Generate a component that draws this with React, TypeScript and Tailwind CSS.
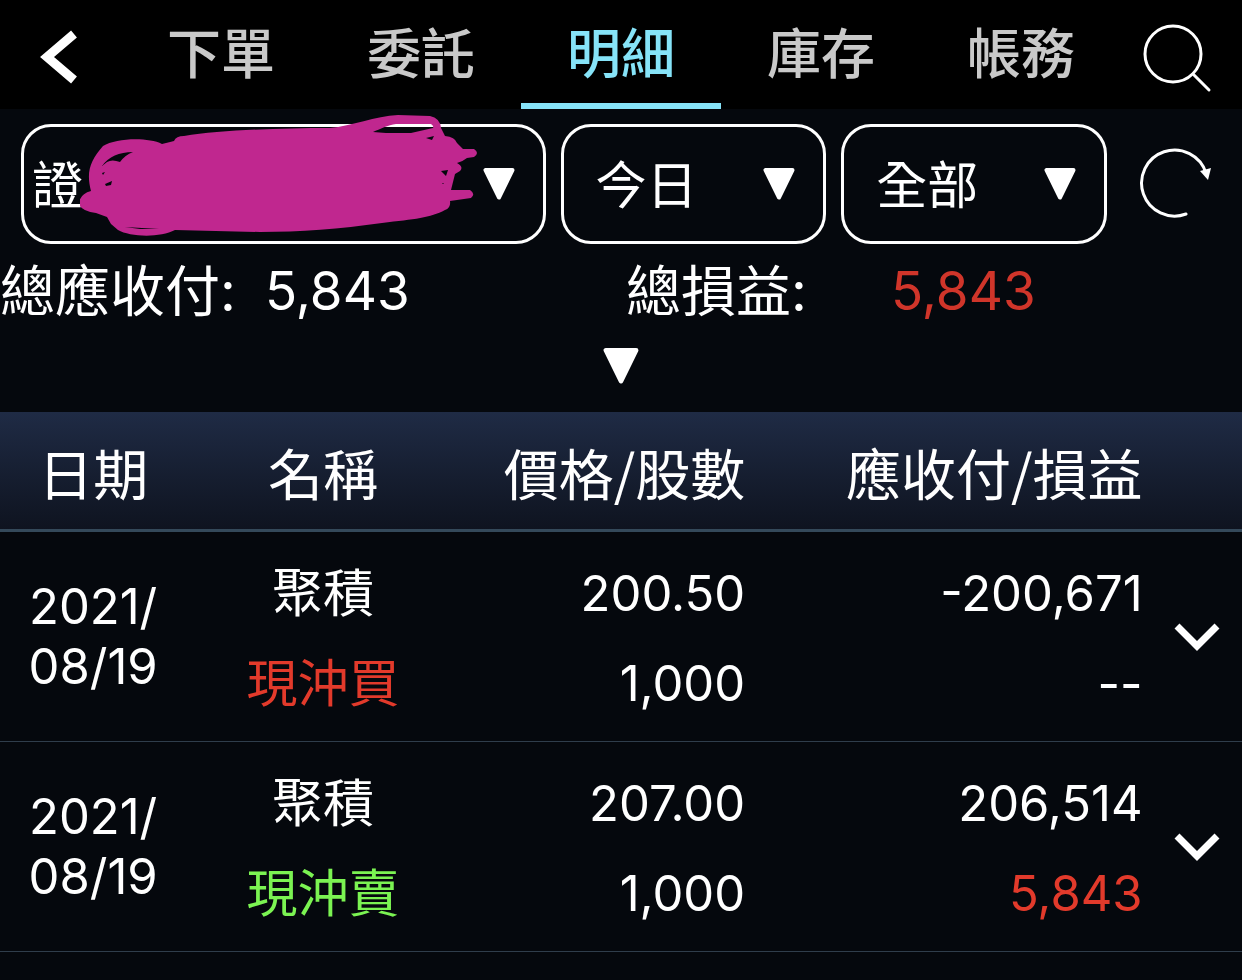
import { useState } from "react";

const TABS = ["下單", "委託", "明細", "庫存", "帳務"];

const RECORDS = [
  { id: 1, year: "2021/", day: "08/19", name: "聚積", side: "現沖買", isBuy: true, price: "200.50", shares: "1,000", amount: "-200,671", profit: "--" },
  { id: 2, year: "2021/", day: "08/19", name: "聚積", side: "現沖賣", isBuy: false, price: "207.00", shares: "1,000", amount: "206,514", profit: "5,843" },
];

export default function App() {
  const [activeTab, setActiveTab] = useState("明細");

  return (
    <div className="min-h-screen bg-[#05080d] text-white font-['Inter','Noto_Sans_CJK_TC',sans-serif]">
      <nav className="grid grid-cols-[121px_repeat(5,1fr)_121px] h-[109px] bg-black">
        <button type="button" aria-label="返回" className="flex items-center pt-1 pl-10">
          <BackIcon />
        </button>
        {TABS.map((tab) => (
          <button
            key={tab}
            type="button"
            onClick={() => setActiveTab(tab)}
            className={
              tab === activeTab
                ? "border-b-6 border-[#86e3f8] pt-1.5 text-[#86e3f8] text-[54px] leading-none font-medium"
                : "border-b-6 border-transparent pt-1.5 text-[#c9c9c9] text-[54px] leading-none font-medium"
            }
          >
            {tab}
          </button>
        ))}
        <button type="button" aria-label="搜尋" className="flex items-center pt-1 pl-5">
          <SearchIcon />
        </button>
      </nav>

      <div className="flex gap-[15px] pt-[15px] pl-[21px]">
        <div className="relative flex-[525]">
          <FilterSelect label="帳號" options={["證"]} className="pl-2" />
          <Scribble />
        </div>
        <div className="relative flex-[266]">
          <FilterSelect label="期間" options={["今日"]} className="pl-8" />
        </div>
        <div className="relative flex-[266]">
          <FilterSelect label="類別" options={["全部"]} className="pl-8" />
        </div>
        <button type="button" aria-label="重新整理" className="w-[120px] pl-4">
          <RefreshIcon />
        </button>
      </div>

      <dl className="grid grid-cols-[265fr_361fr_265fr_351fr] pt-0.5 leading-[90px]">
        <dt className="text-[55px]">總應收付:</dt>
        <dd className="text-[53px]">5,843</dd>
        <dt className="text-[55px]">總損益:</dt>
        <dd className="text-[53px] text-[#d0352a]">5,843</dd>
      </dl>
      <button type="button" aria-label="展開" className="flex w-full justify-center pt-3 pb-7">
        <Triangle className="size-9" />
      </button>

      <table className="w-full table-fixed border-separate border-spacing-0">
        <colgroup>
          <col className="w-[15%]" />
          <col className="w-[22%]" />
          <col className="w-[23%]" />
          <col className="w-[32%]" />
          <col className="w-[8%]" />
        </colgroup>
        <thead>
          <tr className="h-[120px] bg-linear-to-b from-[#1f2b45] to-[#0e131f] text-[55px] leading-[90px] font-['Noto_Sans_CJK_TC',sans-serif] *:border-b-3 *:border-[#34495a]">
            <th className="font-normal">日期</th>
            <th className="font-normal">名稱</th>
            <th className="font-normal text-right whitespace-nowrap">價格/股數</th>
            <th className="font-normal text-right whitespace-nowrap">應收付/損益</th>
            <th aria-label="明細" />
          </tr>
        </thead>
        <tbody>
          {RECORDS.map((record) => (
            <tr key={record.id} className="h-[210px] text-[49px] leading-[90px] *:border-b *:border-[#2f3d4b]">
              <td className="text-center leading-[60px]">
                <div>{record.year}</div>
                <div>{record.day}</div>
              </td>
              <td className="pt-1 text-center text-[51px]">
                <div>{record.name}</div>
                <div className={record.isBuy ? "text-[#e23a2b]" : "text-[#7bf352]"}>{record.side}</div>
              </td>
              <td className="pt-1 text-right">
                <div>{record.price}</div>
                <div>{record.shares}</div>
              </td>
              <td className="pt-1 text-right">
                <div>{record.amount}</div>
                <div className={record.profit === "--" ? "" : "text-[#e23a2b]"}>{record.profit}</div>
              </td>
              <td>
                <button type="button" aria-label="展開明細" className="flex w-full justify-center pt-0.5 pl-2.5">
                  <ChevronIcon />
                </button>
              </td>
            </tr>
          ))}
        </tbody>
      </table>
    </div>
  );
}

function FilterSelect({ label, options, className }: { label: string; options: string[]; className: string }) {
  return (
    <>
      <select
        aria-label={label}
        className={`block w-full h-[120px] appearance-none rounded-[30px] border-3 border-white bg-transparent pt-1 text-[51px] ${className}`}
      >
        {options.map((option) => (
          <option key={option}>{option}</option>
        ))}
      </select>
      <Triangle className="pointer-events-none absolute right-[31px] top-11 size-8" />
    </>
  );
}

function Triangle({ className }: { className: string }) {
  return (
    <svg viewBox="0 0 32 32" className={className} fill="white" stroke="white" strokeWidth="4" strokeLinejoin="round">
      <path d="M2.5 2H29.5L16 29.5Z" />
    </svg>
  );
}

function BackIcon() {
  return (
    <svg width="38" height="54" viewBox="0 0 38 54" fill="none" stroke="white" strokeWidth="9">
      <path d="M34 4L7 27L34 50" />
    </svg>
  );
}

function SearchIcon() {
  return (
    <svg width="72" height="72" viewBox="0 0 72 72" fill="none" stroke="white" strokeWidth="3" strokeLinecap="round">
      <circle cx="32" cy="33" r="28" />
      <path d="M53 54L68 69" />
    </svg>
  );
}

function RefreshIcon() {
  return (
    <svg width="76" height="76" viewBox="0 0 76 76" fill="none" stroke="white" strokeWidth="3" strokeLinecap="round">
      <path d="M48 68A33 33 0 1 1 68 27" />
      <path d="M62 25L73 22L70 34Z" fill="white" stroke="none" />
    </svg>
  );
}

function ChevronIcon() {
  return (
    <svg width="46" height="30" viewBox="0 0 46 30" fill="none" stroke="white" strokeWidth="7">
      <path d="M3 3L23 23L43 3" />
    </svg>
  );
}

// Marker strokes hiding the account number, with the gaps between the strokes left open
function Scribble() {
  return (
    <svg
      width="400"
      height="124"
      viewBox="80 114 400 124"
      className="pointer-events-none absolute left-[59px] -top-[10px]"
      fill="#c0278f"
      fillRule="evenodd"
    >
      <path
        d="M91 191C86 172 90 161 103 146C116 138 148 137 162 144L174 141Q176 136 184 136C220 130 280 128 330 128C352 126 375 116 398 115L430 116Q440 118 441 128L445 136Q455 137 457 143L463 149L474 149Q480 153 474 157L467 158Q462 162 457 163Q464 167 460 171L455 174L451 190L470 190Q476 194 471 198L450 201Q451 208 445 210C430 218 415 219 382 223C340 229 300 232 260 232L175 230C160 238 130 237 118 230L111 224L107 217L96 213Q80 211 79 203Q80 194 91 191Z
        M373 132C380 129 388 125 396 124L431 124Q434 126 433 128L411 133H386Z
        M426 138L434 136L432 140Z
        M102 166Q112 152 133 152Q125 155 120 162Q112 159 107 162Z
        M105 184L112 181L111 185L106 186Z
        M102 173L105 172L103 175Z
        M125 227L159 229L140 229Z
        M441 171L448 170L446 176Z
        M442 183L444 183L443 184Z"
      />
    </svg>
  );
}
